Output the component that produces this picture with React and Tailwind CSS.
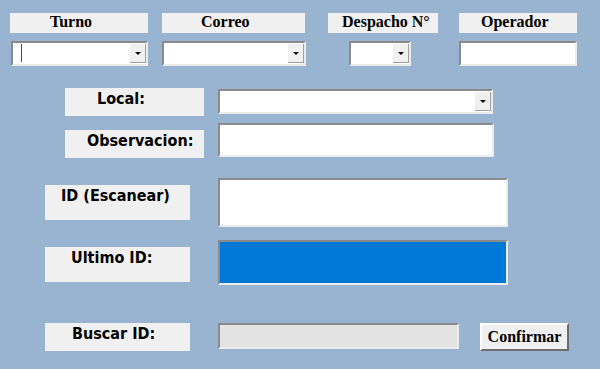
import React from 'react';

// bordes estilo WinForms
const sunken = 'border-2 border-t-[#8a8a8a] border-l-[#8a8a8a] border-b-[#ececec] border-r-[#ececec]';
const serif = "font-['Liberation_Serif','Times_New_Roman',serif]";
const sans = "font-['DejaVu_Sans_Condensed','DejaVu_Sans',sans-serif]";

function Combo({ className = '', caret = false }) {
    return (
        <div className={`flex bg-white ${sunken} ${className}`}>
            <div className="flex-1">
                {caret && <div className="ml-[8px] mt-[1px] h-[18px] w-px bg-[#4a4a4a]" />}
            </div>
            <div className="w-[16px] my-[1px] bg-[#f0f0f0] border-r border-b border-[#a0a0a0] flex items-center justify-center">
                <span className="w-0 h-0 border-l-[3px] border-r-[3px] border-t-[3px] border-l-transparent border-r-transparent border-t-black" />
            </div>
        </div>
    );
}

function TopLabel({ text, pad }) {
    return (
        <div className={`h-[20px] bg-[#f0f0f0] ${serif} font-bold text-[16px] leading-none pt-[1px] text-black ${pad}`}>
            {text}
        </div>
    );
}

function SideLabel({ text, className }) {
    return (
        <div className={`bg-[#f0f0f0] ${sans} font-bold text-[16px] leading-none text-black ${className}`}>
            {text}
        </div>
    );
}

export default function App() {
    return (
        <div className="w-[600px] h-[369px] overflow-hidden bg-[#99b4d1]">
            {/* fila superior */}
            <div className="flex pt-[13px]">
                <div className="ml-[10px] w-[138px]">
                    <TopLabel text="Turno" pad="pl-[40px]" />
                    <Combo caret className="mt-[8px] ml-[1px] h-[25px]" />
                </div>
                <div className="ml-[14px] w-[143px]">
                    <TopLabel text="Correo" pad="pl-[39px]" />
                    <Combo className="mt-[8px] h-[25px] w-[144px]" />
                </div>
                <div className="ml-[23px] w-[110px]">
                    <TopLabel text="Despacho N°" pad="pl-[14px]" />
                    <Combo className="mt-[8px] ml-[21px] w-[62px] h-[25px]" />
                </div>
                <div className="ml-[21px] w-[118px]">
                    <TopLabel text="Operador" pad="pl-[22px]" />
                    <div className={`mt-[8px] h-[25px] bg-white ${sunken}`} />
                </div>
            </div>

            <div className="flex flex-col">
                {/* Local */}
                <div className="flex items-start mt-[22px]">
                    <SideLabel text="Local:" className="ml-[65px] w-[139px] h-[28px] pt-[3px] pl-[32px]" />
                    <Combo className="ml-[14px] mt-[1px] w-[275px] h-[25px]" />
                </div>

                {/* Observacion */}
                <div className="flex items-start mt-[7px]">
                    <SideLabel text="Observacion:" className="ml-[65px] mt-[7px] w-[139px] h-[28px] pt-[3px] pl-[22px]" />
                    <div className={`ml-[14px] w-[276px] h-[34px] bg-white ${sunken}`} />
                </div>

                {/* ID */}
                <div className="flex items-start mt-[20px]">
                    <SideLabel text="ID (Escanear)" className="ml-[45px] mt-[7px] w-[145px] h-[35px] pt-[3px] pl-[16px]" />
                    <div className={`ml-[28px] w-[290px] h-[49px] bg-white ${sunken}`} />
                </div>

                {/* Ultimo */}
                <div className="flex items-start mt-[13px]">
                    <SideLabel text="Ultimo ID:" className="ml-[45px] mt-[7px] w-[145px] h-[35px] pt-[3px] pl-[26px]" />
                    <div className={`ml-[28px] w-[290px] h-[45px] bg-[#0078d7] ${sunken}`} />
                </div>

                {/* Buscar */}
                <div className="flex items-start mt-[38px]">
                    <SideLabel text="Buscar ID:" className="ml-[45px] w-[145px] h-[28px] pt-[3px] pl-[27px]" />
                    <div className={`ml-[28px] w-[241px] h-[26px] bg-[#e3e3e3] ${sunken}`} />
                    <button className={`ml-[21px] w-[89px] h-[28px] bg-[#f0f0f0] border-2 border-t-white border-l-white border-b-[#6d6d6d] border-r-[#6d6d6d] ${serif} font-bold text-[16px] leading-none text-black`}>
                        Confirmar
                    </button>
                </div>
            </div>
        </div>
    );
}
